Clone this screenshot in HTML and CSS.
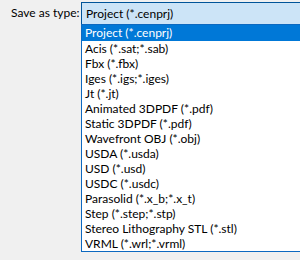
FILE: index.html
```html
<!DOCTYPE html>
<html>
<head>
<meta charset="utf-8">
<link rel="stylesheet" href="styles.css">
</head>
<body>
<div class="row">
  <div class="label">Save as type:</div>
  <div class="combo">
    <div class="field">Project (*.cenprj)</div>
    <ul class="list">
      <li class="sel">Project (*.cenprj)</li>
      <li>Acis (*.sat;*.sab)</li>
      <li>Fbx (*.fbx)</li>
      <li>Iges (*.igs;*.iges)</li>
      <li>Jt (*.jt)</li>
      <li>Animated 3DPDF (*.pdf)</li>
      <li>Static 3DPDF (*.pdf)</li>
      <li>Wavefront OBJ (*.obj)</li>
      <li>USDA (*.usda)</li>
      <li>USD (*.usd)</li>
      <li>USDC (*.usdc)</li>
      <li>Parasolid (*.x_b;*.x_t)</li>
      <li>Step (*.step;*.stp)</li>
      <li>Stereo Lithography STL (*.stl)</li>
      <li>VRML (*.wrl;*.vrml)</li>
    </ul>
  </div>
</div>
</body>
</html>
```
FILE: styles.css
```css
html, body {
  margin: 0;
  padding: 0;
  width: 300px;
  height: 260px;
  overflow: hidden;
  background: #f0f0f0;
  font-family: Lato, "Noto Sans", sans-serif;
  font-size: 12px;
  color: #000;
}
.row {
  display: flex;
  align-items: flex-start;
  padding-top: 2px;
}
.label {
  width: 81px;
  flex: none;
  white-space: nowrap;
  box-sizing: border-box;
  padding-left: 11px;
  height: 23px;
  line-height: 22px;
}
.combo {
  flex: 1;
  min-width: 0;
}
.field {
  height: 21px;
  line-height: 21px;
  background: #cce4f7;
  border: 1px solid #005499;
  border-bottom: none;
  border-right: none;
  padding-left: 4px;
}
.list {
  list-style: none;
  margin: 0;
  padding: 0;
  background: #fff;
  border: 1px solid #0d69c0;
  border-right: none;
}
.list li {
  height: 15px;
  line-height: 15px;
  padding-left: 3px;
  white-space: nowrap;
}
.list li.sel {
  height: 16px;
  line-height: 16px;
  background: #0078d7;
  color: #fff;
}
```
